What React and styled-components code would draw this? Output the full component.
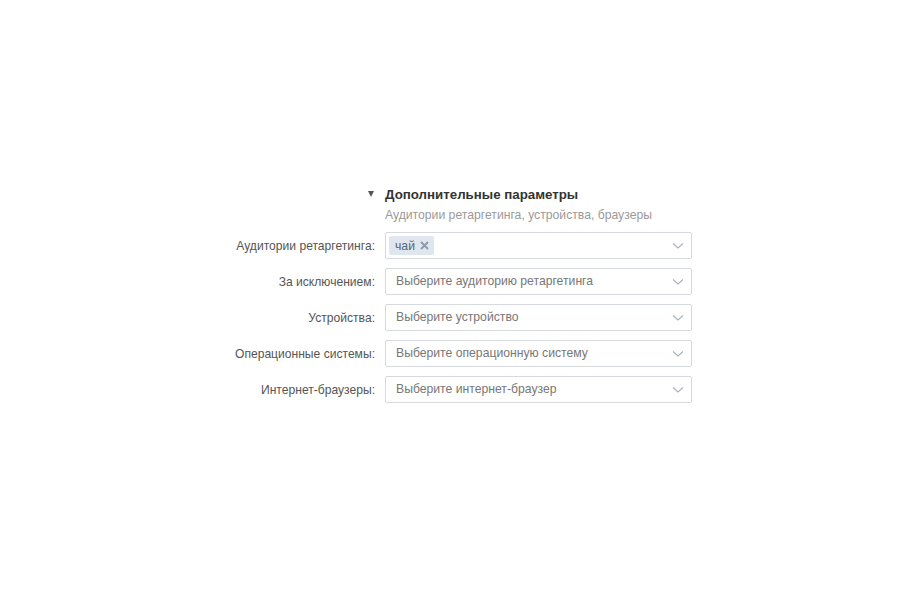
import React from 'react';
import styled, { createGlobalStyle } from 'styled-components';

const GlobalStyle = createGlobalStyle`
  html, body {
    margin: 0;
    padding: 0;
    background: #fff;
    font-family: "Liberation Sans", Arial, sans-serif;
  }
`;

const Page = styled.div`
  width: 900px;
  height: 600px;
  padding-top: 186px;
  box-sizing: border-box;
`;

const Form = styled.div`
  display: grid;
  grid-template-columns: 175px 307px;
  column-gap: 10px;
  row-gap: 9px;
  margin-left: 200px;
  align-items: center;
`;

const Header = styled.div`
  grid-column: 2;
  position: relative;
`;

const Toggle = styled.span`
  position: absolute;
  left: -17px;
  top: 5px;
  width: 0;
  height: 0;
  border-left: 3.5px solid transparent;
  border-right: 3.5px solid transparent;
  border-top: 6px solid #555;
`;

const Title = styled.div`
  font-size: 13.3px;
  font-weight: bold;
  color: #333;
  line-height: 18px;
`;

const Subtitle = styled.div`
  font-size: 12.2px;
  color: #9a9a9a;
  line-height: 16px;
  margin-top: 3px;
`;

const Label = styled.div`
  text-align: right;
  font-size: 12.1px;
  color: #555;
`;

const Select = styled.div`
  height: 27px;
  box-sizing: border-box;
  border: 1px solid #d6d9de;
  border-radius: 2px;
  display: flex;
  align-items: center;
  padding: 0 7px 0 3px;
`;

const Placeholder = styled.span`
  flex: 1;
  padding-left: 7px;
  padding-bottom: 1px;
  font-size: 12.2px;
  color: #777;
`;

const Tags = styled.div`
  flex: 1;
  display: flex;
`;

const Tag = styled.span`
  display: inline-flex;
  align-items: center;
  gap: 5px;
  height: 19px;
  padding: 0 5px 0 6px;
  background: #dfe6ed;
  border-radius: 2px;
  font-size: 12.2px;
  color: #55677d;
`;

const Chevron = () => (
  <svg width="12" height="8" viewBox="0 0 12 8">
    <path d="M1 1.5 L6 6 L11 1.5" fill="none" stroke="#aab1b9" strokeWidth="1.1" />
  </svg>
);

const Cross = () => (
  <svg width="9" height="9" viewBox="0 0 9 9">
    <path d="M1 1 L8 8 M8 1 L1 8" stroke="#8a9bae" strokeWidth="1.8" />
  </svg>
);

const rows = [
  { label: 'Аудитории ретаргетинга:', tags: ['чай'] },
  { label: 'За исключением:', placeholder: 'Выберите аудиторию ретаргетинга' },
  { label: 'Устройства:', placeholder: 'Выберите устройство' },
  { label: 'Операционные системы:', placeholder: 'Выберите операционную систему' },
  { label: 'Интернет-браузеры:', placeholder: 'Выберите интернет-браузер' },
];

const App = () => (
  <Page>
    <GlobalStyle />
    <Form>
      <Header>
        <Toggle />
        <Title>Дополнительные параметры</Title>
        <Subtitle>Аудитории ретаргетинга, устройства, браузеры</Subtitle>
      </Header>
      {rows.map((row) => (
        <React.Fragment key={row.label}>
          <Label>{row.label}</Label>
          <Select>
            {row.tags ? (
              <Tags>
                {row.tags.map((t) => (
                  <Tag key={t}>
                    {t}
                    <Cross />
                  </Tag>
                ))}
              </Tags>
            ) : (
              <Placeholder>{row.placeholder}</Placeholder>
            )}
            <Chevron />
          </Select>
        </React.Fragment>
      ))}
    </Form>
  </Page>
);

export default App;
